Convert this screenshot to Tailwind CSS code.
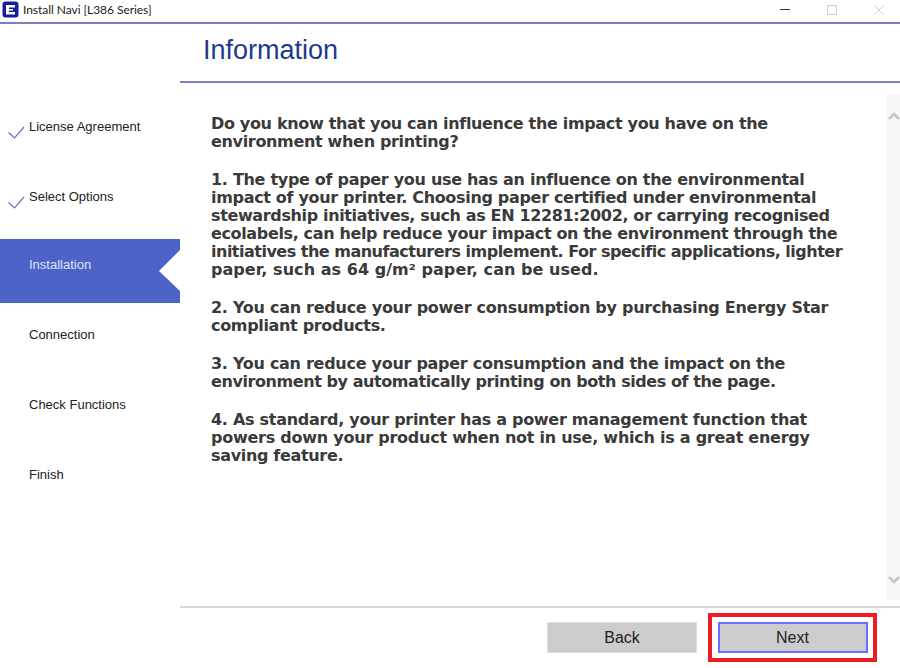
<!DOCTYPE html>
<html>
<head>
<meta charset="utf-8">
<script src="https://cdn.jsdelivr.net/npm/@tailwindcss/browser@4"></script>
</head>
<body class="m-0 bg-white">
<div class="w-[900px] h-[668px] flex flex-col overflow-hidden bg-white font-['Liberation_Sans',sans-serif]">
  <header class="h-[24px] shrink-0 flex items-center border-b-2 border-[#7a80bf] pl-[2px] pb-[4px] pt-[1px]">
    <svg width="17" height="17" viewBox="0 0 17 17" class="shrink-0"><rect x="0.5" y="0.5" width="16" height="16" rx="3" fill="#14209a"/><path d="M4 4h9v2.500H7v1.500h4v1.500H7v1.500h6v2.500H4z" fill="#fff"/></svg>
    <span class="ml-[4px] text-[12px] leading-none text-[#222] font-['Lato',sans-serif] tracking-[-0.05px]">Install Navi [L386 Series]</span>
    <div class="ml-auto flex items-center">
      <svg width="12" height="12" viewBox="0 0 12 12" class="mr-[35px]"><path d="M1 5.500h10" stroke="#333" stroke-width="1"/></svg>
      <svg width="12" height="12" viewBox="0 0 12 12" class="mr-[35px]"><rect x="1.500" y="1.500" width="9" height="9" fill="none" stroke="#cfcfcf"/></svg>
      <svg width="12" height="12" viewBox="0 0 12 12" class="mr-[15px]"><path d="M1 1l10 10M11 1L1 11" stroke="#cfcfcf"/></svg>
    </div>
  </header>
  <div class="flex flex-1 min-h-0">
    <aside class="w-[180px] shrink-0 flex flex-col pt-[75px] text-[13px] text-[#222]">
      <div class="h-[70px] flex pl-[8px]">
        <svg width="17" height="13" viewBox="0 0 17 13" class="mt-[27px] shrink-0"><path d="M0.500 6.500l6 5.500L16 1" fill="none" stroke="#6a70b0" stroke-width="1.200"/></svg>
        <span class="ml-[4px] mt-[20px] leading-[16px]">License Agreement</span>
      </div>
      <div class="h-[70px] flex pl-[8px]">
        <svg width="17" height="13" viewBox="0 0 17 13" class="mt-[27px] shrink-0"><path d="M0.500 6.500l6 5.500L16 1" fill="none" stroke="#6a70b0" stroke-width="1.200"/></svg>
        <span class="ml-[4px] mt-[20px] leading-[16px]">Select Options</span>
      </div>
      <div class="h-[64px] w-[180px] pl-[29px] pt-[18px] leading-[16px] text-[#dfe3f8] bg-[#4e63c8] [clip-path:polygon(0_0,100%_0,100%_11px,159px_32px,100%_52px,100%_100%,0_100%)]">Installation</div>
      <div class="h-[70px] pl-[29px] pt-[24px] leading-[16px]">Connection</div>
      <div class="h-[70px] pl-[29px] pt-[24px] leading-[16px]">Check Functions</div>
      <div class="h-[70px] pl-[29px] pt-[24px] leading-[16px]">Finish</div>
    </aside>
    <main class="flex-1 flex flex-col min-w-0">
      <div class="h-[59px] shrink-0 border-b-2 border-[#7a80bf] pl-[23px] pt-[9px]">
        <h1 class="text-[27px] leading-[34px] text-[#1d3a8f] font-normal">Information</h1>
      </div>
      <div class="h-[523px] shrink-0 flex pl-[31px] pt-[11px]">
        <div class="flex-1 font-['DejaVu_Sans',sans-serif] font-bold text-[16px] leading-[18px] text-[#3a3a3a] pt-[21px] whitespace-nowrap tracking-[-0.33px]">
          <p>Do you know that you can influence the impact you have on the<br>environment when printing?</p>
          <p class="mt-[20px]"><span class="block tracking-[-0.30px]">1. The type of paper you use has an influence on the environmental</span><span class="block tracking-[-0.32px]">impact of your printer. Choosing paper certified under environmental</span><span class="block tracking-[-0.36px]">stewardship initiatives, such as EN 12281:2002, or carrying recognised</span><span class="block tracking-[-0.36px]">ecolabels, can help reduce your impact on the environment through the</span><span class="block tracking-[-0.50px]">initiatives the manufacturers implement. For specific applications, lighter</span><span class="block tracking-[0.05px]">paper, such as 64 g/m² paper, can be used.</span></p>
          <p class="mt-[20px]"><span class="block tracking-[-0.27px]">2. You can reduce your power consumption by purchasing Energy Star</span><span class="block">compliant products.</span></p>
          <p class="mt-[20px]"><span class="block tracking-[-0.28px]">3. You can reduce your paper consumption and the impact on the</span><span class="block tracking-[-0.42px]">environment by automatically printing on both sides of the page.</span></p>
          <p class="mt-[20px]"><span class="block tracking-[-0.285px]">4. As standard, your printer has a power management function that</span><span class="block tracking-[-0.25px]">powers down your product when not in use, which is a great energy</span><span class="block">saving feature.</span></p>
        </div>
        <div class="w-[13px] shrink-0 bg-[#f7f7f7] flex flex-col justify-between items-center h-[506px] pt-[18px] pb-[16px]">
          <svg width="12" height="8" viewBox="0 0 12 8"><path d="M1 7l5-5 5 5" fill="none" stroke="#c4c4c4" stroke-width="2.500"/></svg>
          <svg width="12" height="8" viewBox="0 0 12 8"><path d="M1 1l5 5 5-5" fill="none" stroke="#c4c4c4" stroke-width="2.500"/></svg>
        </div>
      </div>
      <footer class="flex-1 border-t-2 border-[#d8d8d8] flex items-start pl-[367px] pt-[5px]">
        <button class="w-[150px] h-[31px] mt-[9px] bg-[#cccccc] border border-[#e0e0e0] text-[16px] text-[#222]">Back</button>
        <div class="ml-[11px] w-[169px] h-[49px] border-[4px] border-[#ed1c24] flex items-center justify-center">
          <button class="w-[150px] h-[31px] bg-[#cccccc] border-2 border-[#6c6cff] text-[16px] text-[#222]">Next</button>
        </div>
      </footer>
    </main>
  </div>
</div>
</body>
</html>
